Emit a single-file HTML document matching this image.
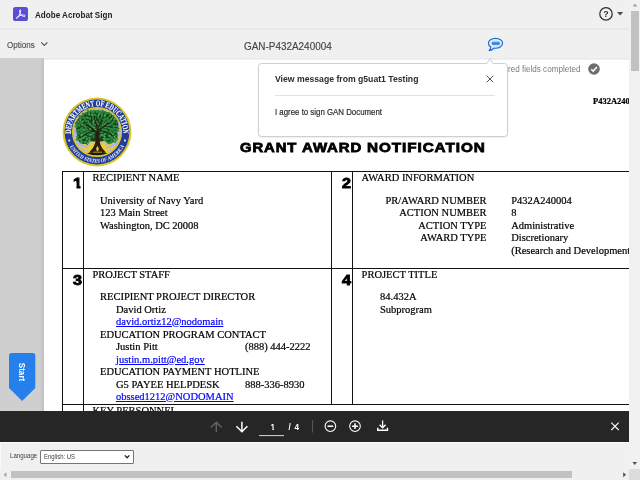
<!DOCTYPE html>
<html lang="en">
<head>
<meta charset="utf-8">
<title>Adobe Acrobat Sign</title>
<style>
html,body{margin:0;padding:0;}
body{width:640px;height:480px;overflow:hidden;position:relative;background:#f0f0f0;font-family:"Liberation Sans",sans-serif;color:#2c2c2c;}
.abs{position:absolute;}
.t{position:absolute;white-space:nowrap;line-height:1;transform-origin:0 0;}
/* header */
#hdr1{left:0;top:0;width:630px;height:28px;background:#f0f0f0;border-bottom:2px solid #e8e8e8;}
#hdr2{left:0;top:30px;width:630px;height:28.2px;background:#f0f0f0;border-bottom:1.4px solid #eaeaea;}
#brand{left:34.6px;top:9.7px;font-size:9.8px;font-weight:bold;color:#1e1e1e;transform:scaleX(0.825);}
#opts{left:7.4px;top:39.9px;font-size:9.6px;color:#505050;-webkit-text-stroke:0.15px #505050;transform:scaleX(0.837);}
#docname{left:243.6px;top:40.5px;font-size:10.5px;color:#464646;-webkit-text-stroke:0.15px #464646;transform:scaleX(0.945);}
/* doc area */
#gray{left:0;top:58.2px;width:44px;height:352.8px;background:linear-gradient(to right,#cfcfcf 0,#cfcfcf 41px,#c6c6c6 41.6px,#c3c3c3 44px);}
#page{left:44px;top:59.6px;width:586px;height:351.4px;background:#fff;overflow:hidden;}
.s{position:absolute;white-space:nowrap;line-height:1;font-family:"Liberation Serif",serif;font-size:10.5px;color:#000;-webkit-text-stroke:0.2px currentColor;}
.lnk{color:#0000ff;text-decoration:underline;text-decoration-thickness:0.7px;text-underline-offset:1px;}
.ln{position:absolute;background:#111;}
.num{position:absolute;white-space:nowrap;line-height:1;font-family:"Liberation Sans",sans-serif;font-weight:bold;font-size:14.4px;color:#000;-webkit-text-stroke:0.9px #000;transform:scaleX(1.12);transform-origin:0 0;}
.ttl{position:absolute;top:140.6px;white-space:nowrap;line-height:1;font-family:"Liberation Sans",sans-serif;font-weight:bold;font-size:13.4px;color:#000;-webkit-text-stroke:0.8px #000;transform-origin:0 0;}
/* popover */
#pop{left:258px;top:63px;width:247.7px;height:71.8px;background:#fff;border:1px solid #cfcfcf;border-radius:3.5px;box-shadow:0 1px 2px rgba(0,0,0,0.07);}
/* toolbar */
#tb{left:0;top:410.8px;width:628.8px;height:31px;background:#262626;}
#foot{left:0;top:441.8px;width:629.4px;height:28.2px;background:#f0f0f0;border-top:1.5px solid #fcfcfc;border-left:1.2px solid #fafafa;box-sizing:border-box;}
/* scrollbars */
#vsb{left:629.3px;top:0;width:10.7px;height:470px;background:#f1f1f1;}
#hsb{left:0;top:469.6px;width:629.4px;height:10.4px;background:#f0f0f0;}
#corner{left:629.4px;top:469.4px;width:10.6px;height:10.6px;background:#dcdcdc;}
</style>
</head>
<body>
<div id="root" style="position:absolute;left:0;top:0;width:640px;height:480px;overflow:hidden;will-change:transform;">

<!-- top header -->
<div class="abs" id="hdr1"></div>
<div class="abs" id="hdr2"></div>

<svg class="abs" style="left:13.1px;top:6.75px" width="15" height="14.2" viewBox="0 0 15 14.2">
  <rect x="0" y="0" width="15" height="14.2" rx="2.5" fill="#5a4ed6"/>
  <path d="M7.1 2.7 C6.2 2.8 6.5 5.0 7.5 6.9 C8.5 8.7 10.6 9.9 11.9 9.3 C12.8 8.8 11.6 7.9 9.7 8.0 C7.6 8.1 4.6 9.4 3.6 10.6 C2.9 11.5 3.8 11.9 4.5 11.0 C5.6 9.7 6.9 6.8 7.4 4.9 C7.8 3.4 7.7 2.7 7.1 2.7 Z" fill="none" stroke="#fff" stroke-width="0.95" stroke-linejoin="round"/>
</svg>
<div class="t" id="brand">Adobe Acrobat Sign</div>

<!-- help icon -->
<svg class="abs" style="left:598px;top:6px" width="28" height="16" viewBox="0 0 28 16">
  <circle cx="8" cy="7.9" r="6.2" fill="none" stroke="#2f2f2f" stroke-width="1.25"/>
  <text x="8" y="11.1" font-family="Liberation Sans, sans-serif" font-size="8.8" font-weight="bold" fill="#2f2f2f" text-anchor="middle">?</text>
  <path d="M19 6.1 L25.2 6.1 L22.1 9.5 Z" fill="#4b4b4b"/>
</svg>

<div class="t" id="opts">Options</div>
<svg class="abs" style="left:40px;top:40px" width="9" height="8" viewBox="0 0 9 8"><path d="M1.2 2.4 L4.3 5.5 L7.4 2.4" fill="none" stroke="#505050" stroke-width="1.1"/></svg>
<div class="t" id="docname">GAN-P432A240004</div>

<!-- chat icon -->
<svg class="abs" style="left:486px;top:36px" width="20" height="18" viewBox="0 0 20 18">
  <defs><linearGradient id="cg" x1="0" y1="0" x2="0" y2="1"><stop offset="0" stop-color="#5b9be8"/><stop offset="1" stop-color="#1f6fd6"/></linearGradient></defs>
  <path d="M9.5 2.4 C5.5 2.4 2.4 4.6 2.4 7.3 C2.4 8.8 3.3 10.1 4.8 11 C4.8 12.2 4.2 13.5 3.2 14.6 C5.2 14.5 6.8 13.6 7.8 12.1 C8.3 12.2 8.9 12.2 9.5 12.2 C13.5 12.2 16.6 10 16.6 7.3 C16.6 4.6 13.5 2.4 9.5 2.4 Z" fill="#e6eef9" stroke="#1a6ad2" stroke-width="1.15" stroke-linejoin="round"/>
  <ellipse cx="9.5" cy="7.3" rx="5.4" ry="3.3" fill="#cfe0f6"/>
  <rect x="5.8" y="5.8" width="8" height="3" rx="1.2" fill="url(#cg)"/>
</svg>

<!-- document area -->
<div class="abs" id="gray"></div>
<div class="abs" id="page">
  <!-- coordinates inside #page are offset by (-44,-59) -->
  <div class="abs" style="left:-44px;top:-59.6px;width:640px;height:480px;">

    <div class="t" style="left:508.4px;top:65.3px;font-size:9px;color:#7a7a7a;transform:scaleX(0.9);">red fields completed</div>
    <svg class="abs" style="left:586.5px;top:62px" width="14" height="14" viewBox="0 0 14 14">
      <circle cx="7" cy="7" r="5.8" fill="#6e6e6e"/>
      <path d="M4.2 7.2 L6.2 9.2 L9.9 4.9" fill="none" stroke="#fff" stroke-width="1.5"/>
    </svg>

    <div class="s" style="left:593px;top:96.8px;font-weight:bold;font-size:8.5px;">P432A240004</div>

    <!-- SEAL -->
    <svg class="abs" id="seal" style="left:59.75px;top:95.4px" width="74" height="74" viewBox="-37 -37 74 74">
      <defs>
        <path id="arcTop" d="M -25.6 4.5 A 26 26 0 1 1 25.6 4.5"/>
        <path id="arcBot" d="M -28.9 10.5 A 30.75 30.75 0 0 0 28.9 10.5"/>
        <clipPath id="inner"><circle cx="0" cy="0" r="23.6"/></clipPath>
      </defs>
      <circle cx="0" cy="0" r="34.4" fill="#dfc428"/>
      <circle cx="0" cy="0" r="32.4" fill="#213e9b"/>
      <circle cx="0" cy="0" r="25.1" fill="#dfc428"/>
      <circle cx="0" cy="0" r="23.6" fill="#aeb6e2"/>
      <g clip-path="url(#inner)">
        <g stroke="#e9cd3e" stroke-width="2" fill="none">
          <path d="M0.5 20 L-30 12"/><path d="M0.5 20 L-30 19.5"/><path d="M0.5 20 L-29 2"/><path d="M0.5 20 L-26 -9"/><path d="M0.5 20 L-19 -20"/><path d="M0.5 20 L-10 -28"/>
          <path d="M0.5 20 L31 12"/><path d="M0.5 20 L31 19.5"/><path d="M0.5 20 L30 2"/><path d="M0.5 20 L27 -9"/><path d="M0.5 20 L20 -20"/><path d="M0.5 20 L11 -28"/><path d="M0.5 20 L0.5 -30"/>
        </g>
        <circle cx="0.5" cy="21" r="10" fill="#efcf28"/>
        <path d="M-30 30 L-30 21.2 L-11 21.2 L12 21.2 L30 21.2 L30 30 Z" fill="#aeb6e2"/>
        <path d="M-12 23.4 C-10 20.6 -5 19.8 0.5 19.8 C6 19.8 11 20.6 13 23.4 Z" fill="#1b1a12"/>
      </g>
      <!-- canopy -->
      <g fill="#15401f">
        <ellipse cx="0" cy="-6" rx="21.4" ry="15.6"/>
        <circle cx="-12.5" cy="4.5" r="7.6"/><circle cx="13" cy="3.5" r="7.6"/>
      </g>
      <g id="leaves">
        <g fill="#2c8a3d">
        <ellipse cx="-7.8" cy="-17.6" rx="1.8" ry="1.1" transform="rotate(-101 -7.8 -17.6)"/>
        <ellipse cx="-5.9" cy="-20.9" rx="1.7" ry="1.1" transform="rotate(-107 -5.9 -20.9)"/>
        <ellipse cx="-16.6" cy="-15.0" rx="2.5" ry="1.2" transform="rotate(-129 -16.6 -15.0)"/>
        <ellipse cx="-16.8" cy="-11.9" rx="1.8" ry="1.2" transform="rotate(-118 -16.8 -11.9)"/>
        <ellipse cx="6.1" cy="-9.6" rx="1.8" ry="0.9" transform="rotate(-46 6.1 -9.6)"/>
        <ellipse cx="-12.9" cy="1.5" rx="2.0" ry="1.2" transform="rotate(158 -12.9 1.5)"/>
        <ellipse cx="-2.1" cy="-12.2" rx="2.3" ry="1.0" transform="rotate(-72 -2.1 -12.2)"/>
        <ellipse cx="3.3" cy="-4.1" rx="2.3" ry="1.0" transform="rotate(5 3.3 -4.1)"/>
        <ellipse cx="-3.6" cy="4.3" rx="2.1" ry="0.9" transform="rotate(85 -3.6 4.3)"/>
        <ellipse cx="7.4" cy="4.5" rx="2.4" ry="1.0" transform="rotate(49 7.4 4.5)"/>
        <ellipse cx="8.6" cy="-1.6" rx="2.1" ry="1.3" transform="rotate(11 8.6 -1.6)"/>
        <ellipse cx="19.6" cy="-5.9" rx="1.7" ry="1.2" transform="rotate(5 19.6 -5.9)"/>
        <ellipse cx="14.2" cy="-12.8" rx="2.2" ry="0.9" transform="rotate(-49 14.2 -12.8)"/>
        <ellipse cx="-1.7" cy="-17.0" rx="1.7" ry="1.2" transform="rotate(-135 -1.7 -17.0)"/>
        <ellipse cx="-18.5" cy="-6.8" rx="2.4" ry="1.3" transform="rotate(-160 -18.5 -6.8)"/>
        <ellipse cx="-3.7" cy="-10.1" rx="2.5" ry="1.0" transform="rotate(-76 -3.7 -10.1)"/>
        <ellipse cx="-11.7" cy="-5.5" rx="1.9" ry="0.9" transform="rotate(-154 -11.7 -5.5)"/>
        <ellipse cx="8.4" cy="-4.4" rx="2.2" ry="0.9" transform="rotate(-4 8.4 -4.4)"/>
        <ellipse cx="17.6" cy="5.1" rx="2.3" ry="1.1" transform="rotate(59 17.6 5.1)"/>
        <ellipse cx="5.9" cy="-20.8" rx="1.9" ry="1.0" transform="rotate(-116 5.9 -20.8)"/>
        <ellipse cx="5.0" cy="-17.7" rx="2.0" ry="1.1" transform="rotate(-97 5.0 -17.7)"/>
        <ellipse cx="-16.6" cy="7.6" rx="2.1" ry="1.1" transform="rotate(199 -16.6 7.6)"/>
        <ellipse cx="-6.9" cy="-13.5" rx="1.8" ry="0.9" transform="rotate(-88 -6.9 -13.5)"/>
        <ellipse cx="-15.5" cy="-3.4" rx="2.1" ry="1.3" transform="rotate(-222 -15.5 -3.4)"/>
        <ellipse cx="16.0" cy="2.1" rx="2.0" ry="1.0" transform="rotate(-10 16.0 2.1)"/>
        <ellipse cx="12.0" cy="-3.8" rx="2.0" ry="1.0" transform="rotate(19 12.0 -3.8)"/>
        <ellipse cx="20.0" cy="-9.9" rx="1.9" ry="1.0" transform="rotate(-49 20.0 -9.9)"/>
        <ellipse cx="12.4" cy="4.0" rx="1.8" ry="1.3" transform="rotate(24 12.4 4.0)"/>
        <ellipse cx="-7.4" cy="5.8" rx="2.0" ry="1.1" transform="rotate(180 -7.4 5.8)"/>
        <ellipse cx="19.7" cy="3.1" rx="1.8" ry="1.0" transform="rotate(-18 19.7 3.1)"/>
        <ellipse cx="-6.6" cy="-3.2" rx="1.7" ry="1.3" transform="rotate(-206 -6.6 -3.2)"/>
        <ellipse cx="-12.7" cy="-13.9" rx="1.9" ry="1.2" transform="rotate(-158 -12.7 -13.9)"/>
        <ellipse cx="-10.6" cy="-7.9" rx="2.4" ry="1.1" transform="rotate(-188 -10.6 -7.9)"/>
        <ellipse cx="-1.8" cy="-2.0" rx="2.0" ry="1.3" transform="rotate(220 -1.8 -2.0)"/>
        <ellipse cx="0.1" cy="-3.9" rx="1.7" ry="1.1" transform="rotate(-85 0.1 -3.9)"/>
        <ellipse cx="13.2" cy="-16.8" rx="2.3" ry="1.2" transform="rotate(-51 13.2 -16.8)"/>
        <ellipse cx="2.7" cy="4.4" rx="2.1" ry="1.2" transform="rotate(108 2.7 4.4)"/>
        <ellipse cx="-10.6" cy="-2.9" rx="2.4" ry="1.0" transform="rotate(-131 -10.6 -2.9)"/>
        <ellipse cx="-18.8" cy="1.1" rx="2.4" ry="1.0" transform="rotate(199 -18.8 1.1)"/>
        <ellipse cx="-3.0" cy="-4.4" rx="1.9" ry="1.0" transform="rotate(-157 -3.0 -4.4)"/>
        <ellipse cx="2.4" cy="-7.1" rx="2.0" ry="1.2" transform="rotate(-113 2.4 -7.1)"/>
        <ellipse cx="0.5" cy="-20.7" rx="2.3" ry="1.3" transform="rotate(-40 0.5 -20.7)"/>
        <ellipse cx="-15.4" cy="10.1" rx="2.3" ry="0.9" transform="rotate(149 -15.4 10.1)"/>
        <ellipse cx="-3.3" cy="-20.4" rx="2.2" ry="1.3" transform="rotate(-56 -3.3 -20.4)"/>
        <ellipse cx="1.2" cy="-14.4" rx="1.8" ry="0.9" transform="rotate(-124 1.2 -14.4)"/>
        <ellipse cx="-14.2" cy="-10.5" rx="1.9" ry="0.9" transform="rotate(-197 -14.2 -10.5)"/>
        <ellipse cx="14.0" cy="-7.4" rx="2.4" ry="1.1" transform="rotate(-22 14.0 -7.4)"/>
        <ellipse cx="10.6" cy="-13.8" rx="1.8" ry="1.3" transform="rotate(-82 10.6 -13.8)"/>
        <ellipse cx="-9.6" cy="-14.3" rx="2.1" ry="1.0" transform="rotate(-149 -9.6 -14.3)"/>
        <ellipse cx="-5.2" cy="-5.9" rx="1.9" ry="1.1" transform="rotate(-143 -5.2 -5.9)"/>
        <ellipse cx="11.0" cy="0.7" rx="2.4" ry="1.1" transform="rotate(35 11.0 0.7)"/>
        <ellipse cx="-15.4" cy="3.1" rx="1.7" ry="1.3" transform="rotate(176 -15.4 3.1)"/>
        <ellipse cx="17.2" cy="-0.4" rx="2.3" ry="1.0" transform="rotate(29 17.2 -0.4)"/>
        <ellipse cx="14.7" cy="6.0" rx="2.2" ry="1.3" transform="rotate(61 14.7 6.0)"/>
        <ellipse cx="8.0" cy="2.0" rx="1.7" ry="1.0" transform="rotate(-1 8.0 2.0)"/>
        <ellipse cx="14.8" cy="-2.9" rx="2.2" ry="1.2" transform="rotate(9 14.8 -2.9)"/>
        <ellipse cx="-0.3" cy="-9.2" rx="2.2" ry="1.2" transform="rotate(-94 -0.3 -9.2)"/>
        <ellipse cx="5.1" cy="0.1" rx="1.8" ry="1.0" transform="rotate(-20 5.1 0.1)"/>
        <ellipse cx="7.7" cy="-12.5" rx="2.1" ry="1.1" transform="rotate(-52 7.7 -12.5)"/>
        <ellipse cx="11.0" cy="7.2" rx="2.4" ry="1.2" transform="rotate(2 11.0 7.2)"/>
        <ellipse cx="17.7" cy="-12.6" rx="2.0" ry="1.3" transform="rotate(-44 17.7 -12.6)"/>
        <ellipse cx="13.7" cy="-0.3" rx="2.5" ry="1.1" transform="rotate(48 13.7 -0.3)"/>
        <ellipse cx="10.2" cy="-6.8" rx="2.2" ry="1.0" transform="rotate(0 10.2 -6.8)"/>
        <ellipse cx="-4.6" cy="-17.0" rx="1.9" ry="1.3" transform="rotate(-141 -4.6 -17.0)"/>
        <ellipse cx="16.0" cy="-15.2" rx="1.9" ry="1.1" transform="rotate(-63 16.0 -15.2)"/>
        <ellipse cx="9.2" cy="9.2" rx="2.2" ry="0.9" transform="rotate(48 9.2 9.2)"/>
        <ellipse cx="-11.8" cy="10.1" rx="1.9" ry="1.0" transform="rotate(149 -11.8 10.1)"/>
        <ellipse cx="8.7" cy="-19.0" rx="2.1" ry="1.2" transform="rotate(-106 8.7 -19.0)"/>
        <ellipse cx="16.9" cy="-5.9" rx="1.9" ry="1.3" transform="rotate(-39 16.9 -5.9)"/>
        <ellipse cx="-21.0" cy="-5.1" rx="2.0" ry="1.0" transform="rotate(-154 -21.0 -5.1)"/>
        <ellipse cx="-7.1" cy="-7.9" rx="1.9" ry="1.3" transform="rotate(-122 -7.1 -7.9)"/>
        <ellipse cx="-3.7" cy="1.0" rx="1.8" ry="1.1" transform="rotate(186 -3.7 1.0)"/>
        <ellipse cx="17.5" cy="8.8" rx="2.5" ry="1.3" transform="rotate(55 17.5 8.8)"/>
        <ellipse cx="-20.7" cy="-8.2" rx="2.3" ry="0.9" transform="rotate(-132 -20.7 -8.2)"/>
        <ellipse cx="20.1" cy="-0.8" rx="2.3" ry="1.0" transform="rotate(-20 20.1 -0.8)"/>
        <ellipse cx="-14.0" cy="5.9" rx="2.4" ry="1.2" transform="rotate(174 -14.0 5.9)"/>
        <ellipse cx="3.4" cy="-11.3" rx="2.5" ry="1.1" transform="rotate(-80 3.4 -11.3)"/>
        <ellipse cx="12.2" cy="11.0" rx="2.2" ry="1.2" transform="rotate(7 12.2 11.0)"/>
        <ellipse cx="7.8" cy="-16.3" rx="1.9" ry="1.3" transform="rotate(-80 7.8 -16.3)"/>
        <ellipse cx="2.2" cy="0.0" rx="1.8" ry="1.2" transform="rotate(1 2.2 0.0)"/>
        <ellipse cx="-2.3" cy="-7.2" rx="2.2" ry="1.1" transform="rotate(-162 -2.3 -7.2)"/>
        <ellipse cx="-11.6" cy="4.5" rx="2.1" ry="1.0" transform="rotate(179 -11.6 4.5)"/>
        <ellipse cx="-19.1" cy="-10.4" rx="1.8" ry="1.3" transform="rotate(-131 -19.1 -10.4)"/>
        <ellipse cx="-14.0" cy="-17.2" rx="2.2" ry="1.3" transform="rotate(-89 -14.0 -17.2)"/>
        <ellipse cx="5.5" cy="-5.9" rx="2.4" ry="1.0" transform="rotate(-72 5.5 -5.9)"/>
        <ellipse cx="-6.6" cy="0.2" rx="2.4" ry="1.2" transform="rotate(156 -6.6 0.2)"/>
        <ellipse cx="-19.4" cy="5.0" rx="2.1" ry="1.3" transform="rotate(111 -19.4 5.0)"/>
        <ellipse cx="-7.6" cy="8.7" rx="1.9" ry="1.3" transform="rotate(108 -7.6 8.7)"/>
        <ellipse cx="-19.1" cy="-1.7" rx="2.4" ry="1.3" transform="rotate(166 -19.1 -1.7)"/>
        <ellipse cx="9.5" cy="-9.8" rx="2.5" ry="1.1" transform="rotate(-57 9.5 -9.8)"/>
        <ellipse cx="-14.5" cy="-7.2" rx="2.2" ry="1.0" transform="rotate(-133 -14.5 -7.2)"/>
        <ellipse cx="-8.7" cy="2.3" rx="1.8" ry="1.0" transform="rotate(188 -8.7 2.3)"/>
        <ellipse cx="-11.1" cy="-11.2" rx="1.8" ry="1.0" transform="rotate(-138 -11.1 -11.2)"/>
        <ellipse cx="1.9" cy="-17.2" rx="2.5" ry="1.1" transform="rotate(-55 1.9 -17.2)"/>
        <ellipse cx="-8.7" cy="-5.7" rx="2.2" ry="1.2" transform="rotate(-164 -8.7 -5.7)"/>
        <ellipse cx="14.4" cy="9.6" rx="1.8" ry="1.3" transform="rotate(67 14.4 9.6)"/>
        <ellipse cx="7.3" cy="7.3" rx="2.0" ry="1.3" transform="rotate(39 7.3 7.3)"/>
        <ellipse cx="15.9" cy="-9.8" rx="2.1" ry="1.2" transform="rotate(-29 15.9 -9.8)"/>
        <ellipse cx="-10.7" cy="-18.5" rx="1.8" ry="1.0" transform="rotate(-125 -10.7 -18.5)"/>
        <ellipse cx="-10.1" cy="7.2" rx="1.8" ry="1.1" transform="rotate(121 -10.1 7.2)"/>
        <ellipse cx="12.2" cy="-10.8" rx="2.0" ry="1.1" transform="rotate(-62 12.2 -10.8)"/>
        <ellipse cx="5.3" cy="-14.0" rx="2.4" ry="1.3" transform="rotate(-112 5.3 -14.0)"/>
        <ellipse cx="5.0" cy="3.1" rx="1.8" ry="1.0" transform="rotate(28 5.0 3.1)"/>
        <ellipse cx="-9.3" cy="-0.3" rx="2.3" ry="0.9" transform="rotate(146 -9.3 -0.3)"/>
        <ellipse cx="21.0" cy="-3.3" rx="1.8" ry="1.2" transform="rotate(-18 21.0 -3.3)"/>
        <ellipse cx="-6.0" cy="2.8" rx="2.3" ry="0.9" transform="rotate(145 -6.0 2.8)"/>
        <ellipse cx="18.0" cy="-3.1" rx="2.4" ry="1.1" transform="rotate(22 18.0 -3.1)"/>
        <ellipse cx="-15.7" cy="-0.3" rx="2.0" ry="1.2" transform="rotate(204 -15.7 -0.3)"/>
        <ellipse cx="-13.1" cy="-1.9" rx="2.3" ry="1.2" transform="rotate(202 -13.1 -1.9)"/>
        <ellipse cx="-8.5" cy="-10.1" rx="2.3" ry="1.0" transform="rotate(-111 -8.5 -10.1)"/>
        <ellipse cx="-16.4" cy="-9.1" rx="1.9" ry="1.2" transform="rotate(-177 -16.4 -9.1)"/>
        <ellipse cx="19.6" cy="7.2" rx="1.8" ry="1.3" transform="rotate(-22 19.6 7.2)"/>
        <ellipse cx="-3.9" cy="-14.1" rx="2.0" ry="0.9" transform="rotate(-89 -3.9 -14.1)"/>
        <ellipse cx="3.1" cy="-19.7" rx="2.2" ry="1.1" transform="rotate(-32 3.1 -19.7)"/>
        <ellipse cx="-9.2" cy="11.1" rx="2.5" ry="1.0" transform="rotate(117 -9.2 11.1)"/>
        <ellipse cx="-8.6" cy="-20.4" rx="2.3" ry="1.1" transform="rotate(-128 -8.6 -20.4)"/>
        <ellipse cx="5.5" cy="-2.5" rx="2.3" ry="1.3" transform="rotate(18 5.5 -2.5)"/>
        <ellipse cx="7.6" cy="-7.3" rx="2.3" ry="1.2" transform="rotate(-44 7.6 -7.3)"/>
        <ellipse cx="11.4" cy="-18.9" rx="1.9" ry="1.0" transform="rotate(-8 11.4 -18.9)"/>
        <ellipse cx="-19.2" cy="7.8" rx="2.3" ry="1.0" transform="rotate(180 -19.2 7.8)"/>
        </g>
        <g fill="#55b05a">
        <ellipse cx="-7.8" cy="-17.9" rx="1.0" ry="0.6" transform="rotate(-101 -7.8 -17.9)"/>
        <ellipse cx="-16.8" cy="-12.2" rx="1.0" ry="0.6" transform="rotate(-118 -16.8 -12.2)"/>
        <ellipse cx="-2.1" cy="-12.5" rx="1.2" ry="0.5" transform="rotate(-72 -2.1 -12.5)"/>
        <ellipse cx="7.4" cy="4.2" rx="1.3" ry="0.5" transform="rotate(49 7.4 4.2)"/>
        <ellipse cx="14.2" cy="-13.1" rx="1.2" ry="0.5" transform="rotate(-49 14.2 -13.1)"/>
        <ellipse cx="-3.7" cy="-10.4" rx="1.4" ry="0.5" transform="rotate(-76 -3.7 -10.4)"/>
        <ellipse cx="17.6" cy="4.8" rx="1.3" ry="0.5" transform="rotate(59 17.6 4.8)"/>
        <ellipse cx="-16.6" cy="7.3" rx="1.1" ry="0.6" transform="rotate(199 -16.6 7.3)"/>
        <ellipse cx="16.0" cy="1.8" rx="1.1" ry="0.5" transform="rotate(-10 16.0 1.8)"/>
        <ellipse cx="12.4" cy="3.7" rx="1.0" ry="0.6" transform="rotate(24 12.4 3.7)"/>
        <ellipse cx="-6.6" cy="-3.5" rx="0.9" ry="0.7" transform="rotate(-206 -6.6 -3.5)"/>
        <ellipse cx="-1.8" cy="-2.3" rx="1.1" ry="0.7" transform="rotate(220 -1.8 -2.3)"/>
        <ellipse cx="2.7" cy="4.1" rx="1.1" ry="0.6" transform="rotate(108 2.7 4.1)"/>
        <ellipse cx="-3.0" cy="-4.7" rx="1.0" ry="0.5" transform="rotate(-157 -3.0 -4.7)"/>
        <ellipse cx="-15.4" cy="9.8" rx="1.2" ry="0.5" transform="rotate(149 -15.4 9.8)"/>
        <ellipse cx="-14.2" cy="-10.8" rx="1.0" ry="0.5" transform="rotate(-197 -14.2 -10.8)"/>
        <ellipse cx="-9.6" cy="-14.6" rx="1.1" ry="0.5" transform="rotate(-149 -9.6 -14.6)"/>
        <ellipse cx="-15.4" cy="2.8" rx="1.0" ry="0.6" transform="rotate(176 -15.4 2.8)"/>
        <ellipse cx="8.0" cy="1.7" rx="0.9" ry="0.5" transform="rotate(-1 8.0 1.7)"/>
        <ellipse cx="5.1" cy="-0.2" rx="1.0" ry="0.5" transform="rotate(-20 5.1 -0.2)"/>
        <ellipse cx="17.7" cy="-12.9" rx="1.1" ry="0.7" transform="rotate(-44 17.7 -12.9)"/>
        <ellipse cx="-4.6" cy="-17.3" rx="1.0" ry="0.7" transform="rotate(-141 -4.6 -17.3)"/>
        <ellipse cx="-11.8" cy="9.8" rx="1.1" ry="0.5" transform="rotate(149 -11.8 9.8)"/>
        <ellipse cx="-21.0" cy="-5.4" rx="1.1" ry="0.5" transform="rotate(-154 -21.0 -5.4)"/>
        <ellipse cx="17.5" cy="8.5" rx="1.4" ry="0.7" transform="rotate(55 17.5 8.5)"/>
        <ellipse cx="-14.0" cy="5.6" rx="1.3" ry="0.6" transform="rotate(174 -14.0 5.6)"/>
        <ellipse cx="7.8" cy="-16.6" rx="1.0" ry="0.6" transform="rotate(-80 7.8 -16.6)"/>
        <ellipse cx="-11.6" cy="4.2" rx="1.1" ry="0.5" transform="rotate(179 -11.6 4.2)"/>
        <ellipse cx="5.5" cy="-6.2" rx="1.3" ry="0.5" transform="rotate(-72 5.5 -6.2)"/>
        <ellipse cx="-7.6" cy="8.4" rx="1.0" ry="0.7" transform="rotate(108 -7.6 8.4)"/>
        <ellipse cx="-14.5" cy="-7.5" rx="1.2" ry="0.5" transform="rotate(-133 -14.5 -7.5)"/>
        <ellipse cx="1.9" cy="-17.5" rx="1.3" ry="0.6" transform="rotate(-55 1.9 -17.5)"/>
        <ellipse cx="7.3" cy="7.0" rx="1.1" ry="0.7" transform="rotate(39 7.3 7.0)"/>
        <ellipse cx="-10.1" cy="6.9" rx="1.0" ry="0.6" transform="rotate(121 -10.1 6.9)"/>
        <ellipse cx="5.0" cy="2.8" rx="1.0" ry="0.5" transform="rotate(28 5.0 2.8)"/>
        <ellipse cx="-6.0" cy="2.5" rx="1.3" ry="0.5" transform="rotate(145 -6.0 2.5)"/>
        <ellipse cx="-13.1" cy="-2.2" rx="1.3" ry="0.6" transform="rotate(202 -13.1 -2.2)"/>
        <ellipse cx="19.6" cy="6.9" rx="1.0" ry="0.7" transform="rotate(-22 19.6 6.9)"/>
        <ellipse cx="-9.2" cy="10.8" rx="1.4" ry="0.5" transform="rotate(117 -9.2 10.8)"/>
        <ellipse cx="7.6" cy="-7.6" rx="1.3" ry="0.6" transform="rotate(-44 7.6 -7.6)"/>
        </g>
      </g>
      <!-- trunk and branches -->
      <g fill="none" stroke="#2a1c0e" stroke-linecap="round">
        <path d="M0.4 1 C-3 -3 -7 -4 -11 -8" stroke-width="1.3"/>
        <path d="M0.8 0 C3 -4 7 -5 11 -9" stroke-width="1.3"/>
        <path d="M0.4 -1 C0 -6 -1 -10 -3 -15" stroke-width="1.1"/>
        <path d="M1 -2 C2 -7 4 -11 6 -15" stroke-width="1"/>
        <path d="M-3 -1 C-8 0 -12 2 -15 5" stroke-width="1"/>
        <path d="M3 -1 C8 -1 12 1 15 3" stroke-width="1"/>
      </g>
      <path d="M-1.3 -1 C-0.8 5 -0.8 9 -2.4 12.6 C-3.6 15.6 -5.4 18 -8 20.6 L9 20.6 C6.4 18 4.6 15.6 3.4 12.6 C2.2 9 2.4 5 2.9 0 Z" fill="#2a1c0e"/>
      <path d="M0.5 14 C2.2 16 2.4 17.8 0.5 19.4 C-1.4 17.8 -1.2 16 0.5 14 Z" fill="#e3c530"/>
      <path d="M-4 20.2 L5 20.2" stroke="#d8bb2c" stroke-width="0.8"/>
      <text font-family="Liberation Serif, serif" font-size="8.4" font-weight="bold" fill="#fff" stroke="#fff" stroke-width="0.1" textLength="85" lengthAdjust="spacingAndGlyphs"><textPath href="#arcTop" startOffset="2.8">DEPARTMENT OF EDUCATION</textPath></text>
      <text font-family="Liberation Serif, serif" font-size="5.5" font-weight="bold" font-style="italic" fill="#f4f4fb" textLength="66.6" lengthAdjust="spacingAndGlyphs"><textPath href="#arcBot" startOffset="4.3">UNITED STATES OF AMERICA</textPath></text>
      <rect x="-28.7" y="7.6" width="1.8" height="1.8" fill="#f4f4fb"/><rect x="27" y="7.6" width="1.8" height="1.8" fill="#f4f4fb"/>
    </svg>

    <div class="ttl" style="left:240.1px;letter-spacing:0.8px;transform:scaleX(1.108);">GRANT</div>
    <div class="ttl" style="left:302.3px;letter-spacing:0.8px;transform:scaleX(1.118);">AWARD</div>
    <div class="ttl" style="left:367.3px;letter-spacing:0.8px;transform:scaleX(1.143);">NOTIFICATION</div>

    <!-- table lines -->
    <div class="ln" style="left:62px;top:170.9px;width:580px;height:1.35px;"></div>
    <div class="ln" style="left:62px;top:267.9px;width:580px;height:1.35px;"></div>
    <div class="ln" style="left:62px;top:404.1px;width:580px;height:1.35px;"></div>
    <div class="ln" style="left:62px;top:171px;width:1.25px;height:250px;"></div>
    <div class="ln" style="left:83px;top:171px;width:1.25px;height:250px;"></div>
    <div class="ln" style="left:331px;top:171px;width:1.1px;height:234px;"></div>
    <div class="ln" style="left:352px;top:171px;width:1.1px;height:234px;"></div>

    <div class="num" style="left:73.1px;top:175.9px;clip-path:polygon(-2px -2px,6.8px -2px,6.8px 20px,3.1px 20px,3.1px 6.4px,-2px 6.4px);">1</div>
    <div class="num" style="left:341.7px;top:175.9px;">2</div>
    <div class="num" style="left:73.2px;top:273.2px;">3</div>
    <div class="num" style="left:341.6px;top:273.2px;">4</div>

    <!-- cell 1 -->
    <div class="s" style="left:92.5px;top:172.55px;">RECIPIENT NAME</div>
    <div class="s" style="left:100px;top:195.55px;">University of Navy Yard</div>
    <div class="s" style="left:100px;top:207.55px;">123 Main Street</div>
    <div class="s" style="left:100px;top:220.55px;">Washington, DC 20008</div>

    <!-- cell 2 -->
    <div class="s" style="left:361.6px;top:172.55px;">AWARD INFORMATION</div>
    <div class="s" style="right:153.5px;top:195.55px;">PR/AWARD NUMBER</div>
    <div class="s" style="right:153.5px;top:207.55px;">ACTION NUMBER</div>
    <div class="s" style="right:153.5px;top:220.55px;">ACTION TYPE</div>
    <div class="s" style="right:153.5px;top:232.55px;">AWARD TYPE</div>
    <div class="s" style="left:511.2px;top:195.55px;">P432A240004</div>
    <div class="s" style="left:511.2px;top:207.55px;">8</div>
    <div class="s" style="left:511.2px;top:220.55px;">Administrative</div>
    <div class="s" style="left:511.2px;top:232.55px;">Discretionary</div>
    <div class="s" style="left:511.2px;top:245.55px;">(Research and Development)</div>

    <!-- cell 3 -->
    <div class="s" style="left:92.5px;top:269.55px;">PROJECT STAFF</div>
    <div class="s" style="left:100px;top:291.55px;">RECIPIENT PROJECT DIRECTOR</div>
    <div class="s" style="left:116px;top:304.55px;">David Ortiz</div>
    <div class="s lnk" style="left:116px;top:316.55px;">david.ortiz12@nodomain</div>
    <div class="s" style="left:100px;top:329.55px;">EDUCATION PROGRAM CONTACT</div>
    <div class="s" style="left:116px;top:341.55px;">Justin Pitt</div>
    <div class="s" style="left:245px;top:341.55px;">(888) 444-2222</div>
    <div class="s lnk" style="left:116px;top:354.55px;">justin.m.pitt@ed.gov</div>
    <div class="s" style="left:100px;top:366.55px;">EDUCATION PAYMENT HOTLINE</div>
    <div class="s" style="left:116px;top:379.55px;">G5 PAYEE HELPDESK</div>
    <div class="s" style="left:245px;top:379.55px;">888-336-8930</div>
    <div class="s lnk" style="left:116px;top:391.55px;">obssed1212@NODOMAIN</div>
    <div class="s" style="left:92.5px;top:405.55px;">KEY PERSONNEL</div>

    <!-- cell 4 -->
    <div class="s" style="left:361.6px;top:269.55px;">PROJECT TITLE</div>
    <div class="s" style="left:380px;top:291.55px;">84.432A</div>
    <div class="s" style="left:380px;top:304.55px;">Subprogram</div>
  </div>
</div>

<!-- Start flag -->
<svg class="abs" style="left:8.8px;top:353px" width="27" height="49" viewBox="0 0 27 49">
  <path d="M2.6 0.1 L23.7 0.1 Q26.3 0.1 26.3 2.7 L26.3 35 L13.15 47.9 L0 35 L0 2.7 Q0 0.1 2.6 0.1 Z" fill="#2680eb"/>
  <text transform="translate(9.6,9.7) rotate(90) scale(0.9,1)" font-family="Liberation Sans, sans-serif" font-size="9.1" font-weight="bold" fill="#fff">Start</text>
</svg>

<!-- popover -->
<div class="abs" id="pop"></div>
<svg class="abs" style="left:482px;top:57px" width="16" height="8" viewBox="0 0 16 8">
  <path d="M4.7 7 L8 1.4 L11.3 7" fill="#fff" stroke="#cfcfcf" stroke-width="1"/>
  <rect x="5.1" y="6.5" width="5.8" height="1.5" fill="#fff"/>
</svg>
<div class="t" style="left:274.6px;top:74.2px;font-size:9.8px;font-weight:bold;color:#2c2c2c;transform:scaleX(0.883);">View message from g5uat1 Testing</div>
<svg class="abs" style="left:485px;top:74.4px" width="10" height="10" viewBox="0 0 10 10"><path d="M1.7 1.7 L8.3 8.3 M8.3 1.7 L1.7 8.3" stroke="#505050" stroke-width="1" fill="none"/></svg>
<div class="abs" style="left:274.5px;top:95px;width:220.5px;height:1px;background:#e1e1e1;"></div>
<div class="t" style="left:274.6px;top:108.1px;font-size:8.8px;color:#2c2c2c;-webkit-text-stroke:0.2px #2c2c2c;transform:scaleX(0.893);">I agree to sign GAN Document</div>

<!-- bottom toolbar -->
<div class="abs" id="tb"></div>
<svg class="abs" style="left:200px;top:411px" width="430" height="31" viewBox="200 0 430 31">
  <g fill="none" stroke-width="1.4" stroke-linecap="butt">
    <path d="M216.3 21 L216.3 11.2 M210.9 16.6 L216.3 11.2 L221.7 16.6" stroke="#636363"/>
    <path d="M241.9 10.8 L241.9 20.8 M236.4 15.3 L241.9 20.8 L247.4 15.3" stroke="#fff" stroke-width="1.5"/>
    <path d="M259 24.6 L284 24.6" stroke="#d8d8d8" stroke-width="1"/>
    <path d="M312.6 9.3 L312.6 21.5" stroke="#5a5a5a" stroke-width="1"/>
    <circle cx="330.4" cy="15.2" r="5.3" stroke="#fff" stroke-width="1.1"/>
    <path d="M327.5 15.2 L333.3 15.2" stroke="#fff" stroke-width="1.5"/>
    <circle cx="355" cy="15.2" r="5.3" stroke="#fff" stroke-width="1.1"/>
    <path d="M352.1 15.2 L357.9 15.2 M355 12.3 L355 18.1" stroke="#fff" stroke-width="1.5"/>
    <path d="M382.6 9.6 L382.6 16.6 M379.6 13.8 L382.6 16.8 L385.6 13.8" stroke="#fff" stroke-width="1.3"/>
    <path d="M377.8 16.8 L377.8 19.3 L387.4 19.3 L387.4 16.8" stroke="#fff" stroke-width="1.5"/>
    <path d="M611.3 11.6 L618.7 19 M618.7 11.6 L611.3 19" stroke="#fff" stroke-width="1.1"/>
  </g>
  <text x="288.4" y="18.8" font-family="Liberation Sans, sans-serif" font-size="8.2" font-weight="bold" fill="#fff" word-spacing="1.6">/ 4</text>
</svg>
<div class="t" style="left:270.5px;top:423.5px;font-size:8.2px;font-weight:bold;color:#fff;clip-path:polygon(-1px -1px,3.55px -1px,3.55px 12px,1.85px 12px,1.85px 4.2px,-1px 4.2px);">1</div>

<!-- footer -->
<div class="abs" id="foot"></div>
<div class="t" style="left:9.8px;top:452.1px;font-size:7.8px;color:#3c3c3c;transform:scaleX(0.784);">Language</div>
<div class="abs" style="left:40px;top:450px;width:92px;height:12px;background:#fff;border:1px solid #767676;border-radius:1px;"></div>
<div class="t" style="left:43.5px;top:453.3px;font-size:7.8px;color:#3c3c3c;transform:scaleX(0.76);">English: US</div>
<svg class="abs" style="left:123px;top:453px" width="8" height="8" viewBox="0 0 8 8"><path d="M1.8 2.4 L4.1 4.8 L6.4 2.4" fill="none" stroke="#222" stroke-width="1.3"/></svg>

<!-- scrollbars -->
<div class="abs" id="vsb"></div>
<div class="abs" style="left:630.9px;top:10.8px;width:7.9px;height:59.9px;background:#c1c1c1;"></div>
<svg class="abs" style="left:630px;top:0" width="10" height="10" viewBox="0 0 10 10"><path d="M2.6 6.4 L7.4 6.4 L5 3.6 Z" fill="#a3a3a3"/></svg>
<svg class="abs" style="left:630px;top:460px" width="10" height="10" viewBox="0 0 10 10"><path d="M2.4 2.1 L7.1 2.1 L4.75 4.9 Z" fill="#505050"/></svg>
<div class="abs" id="hsb"></div>
<div class="abs" style="left:11px;top:470.6px;width:561.3px;height:7.9px;background:#c1c1c1;"></div>
<svg class="abs" style="left:0;top:470px" width="10" height="10" viewBox="0 0 10 10"><path d="M6.4 2.3 L6.4 7.2 L3.6 4.75 Z" fill="#a3a3a3"/></svg>
<svg class="abs" style="left:620px;top:470px" width="10" height="10" viewBox="0 0 10 10"><path d="M3.2 2.3 L3.2 7.2 L6 4.75 Z" fill="#505050"/></svg>
<div class="abs" id="corner"></div>

</div>
</body>
</html>
